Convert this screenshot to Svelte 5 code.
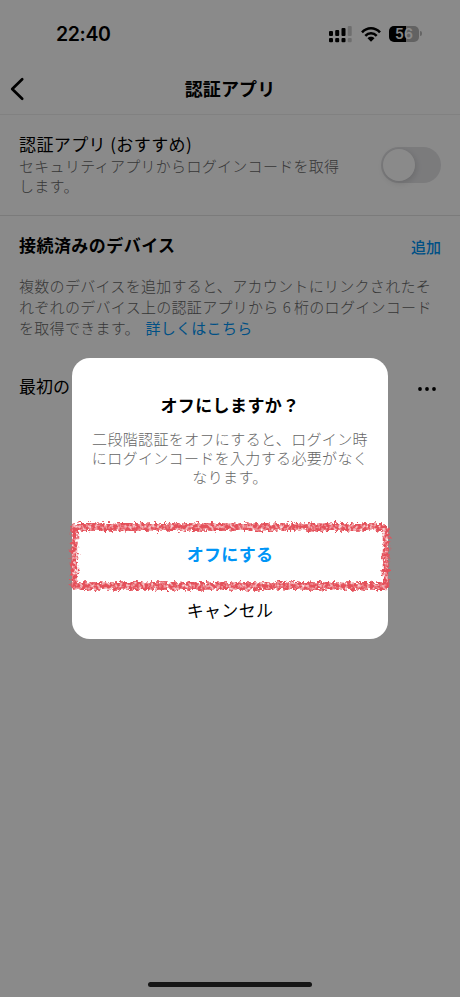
<script lang="ts">
  type Bar = { x: number; top: number; active: boolean }

  const bars: Bar[] = [
    { x: 0, top: 5, active: true },
    { x: 6.2, top: 4, active: true },
    { x: 12.5, top: 2, active: true },
    { x: 18.7, top: 0, active: false },
  ]

  let enabled = $state(false)
  let open = $state(true)

  function turnOff() {
    enabled = false
    open = false
  }
</script>

<div class="screen">
  <header class="status">
    <span class="time">22:40</span>
    <div class="indicators">
      <svg class="signal" width="23" height="17" viewBox="0 0 23 17">
        {#each bars as bar}
          <g opacity={bar.active ? 1 : 0.2}>
            <rect x={bar.x} y={bar.top} width="4" height={10 - bar.top} rx="1.1" />
            <rect x={bar.x} y="12" width="4" height="4.3" rx="1.1" />
          </g>
        {/each}
      </svg>
      <svg class="wifi" width="20" height="15" viewBox="0 0 20 15">
        <g fill="none" stroke="#000" stroke-width="2.5">
          <path d="M1 5.4C6-.1 14-.1 19 5.4" />
          <path d="M4.3 8.8c3.2-3.3 8.2-3.3 11.4 0" />
        </g>
        <path d="M6.5 11.2c2-1.9 5-1.9 7 0L10 14.7z" />
      </svg>
      <div class="battery"><span>56</span></div>
      <i class="tip"></i>
    </div>
  </header>

  <nav>
    <button class="back" aria-label="戻る">
      <svg width="15" height="24" viewBox="0 0 15 24">
        <path
          d="M12.2 2.3L2.2 12l10 9.7"
          fill="none"
          stroke="#000"
          stroke-width="2.7"
          stroke-linecap="round"
          stroke-linejoin="round"
        />
      </svg>
    </button>
    <h1>認証アプリ</h1>
  </nav>

  <section class="method">
    <div>
      <div class="label">認証アプリ (おすすめ)</div>
      <p>セキュリティアプリからログインコードを取得<br />します。</p>
    </div>
    <button
      class="toggle"
      class:on={enabled}
      aria-label="認証アプリ"
      onclick={() => (enabled = !enabled)}
    ></button>
  </section>

  <section class="devices">
    <div class="heading">
      <h2>接続済みのデバイス</h2>
      <button class="add">追加</button>
    </div>
    <p>
      複数のデバイスを追加すると、アカウントにリンクされたそ<br />れぞれのデバイス上の認証アプリから<span
        class="digit">6</span>桁のログインコード<br />を取得できます。<span class="link">詳しくはこちら</span>
    </p>
    <div class="device">
      <span>最初の</span>
      <svg width="20" height="6" viewBox="0 0 20 6">
        <circle cx="3" cy="3" r="1.9" />
        <circle cx="10" cy="3" r="1.9" />
        <circle cx="17" cy="3" r="1.9" />
      </svg>
    </div>
  </section>

  {#if open}
    <div class="backdrop">
      <div class="dialog">
        <h3>オフにしますか？</h3>
        <p>二段階認証をオフにすると、ログイン時<br />にログインコードを入力する必要がなく<br />なります。</p>
        <button class="confirm" onclick={turnOff}>オフにする</button>
        <button class="cancel" onclick={() => (open = false)}>キャンセル</button>
        <svg class="marker" width="332" height="84" viewBox="0 0 332 84">
          <defs>
            <filter
              id="crayon"
              x="0"
              y="0"
              width="332"
              height="84"
              filterUnits="userSpaceOnUse"
              color-interpolation-filters="sRGB"
            >
              <feTurbulence type="fractalNoise" baseFrequency="0.3" numOctaves="3" seed="8" result="noise" />
              <feDisplacementMap in="SourceGraphic" in2="noise" scale="8" xChannelSelector="R" yChannelSelector="G" result="rough" />
              <feTurbulence type="fractalNoise" baseFrequency="0.32" numOctaves="2" seed="3" />
              <feColorMatrix values="0 0 0 0 0  0 0 0 0 0  0 0 0 0 0  0 0 0 -2.2 1.95" result="grain" />
              <feComposite in="rough" in2="grain" operator="in" />
              <feGaussianBlur stdDeviation="0.7" />
            </filter>
          </defs>
          <g filter="url(#crayon)" fill="none" stroke="#e4505a" stroke-linecap="round">
            <path d="M11 14H318M11 73H320" stroke-width="8" />
            <path d="M10 15V72M322 17V72" stroke-width="6.5" />
          </g>
        </svg>
      </div>
    </div>
  {/if}

  <div class="home"></div>
</div>

<style>
  :global(body) {
    margin: 0;
  }

  .screen {
    position: relative;
    width: 460px;
    height: 997px;
    overflow: hidden;
    background: #fff;
    color: #000;
    font-family: "Noto Sans CJK JP", sans-serif;
  }

  h1,
  h2,
  h3,
  p {
    margin: 0;
  }

  p {
    color: #666;
    font-size: 15px;
    font-weight: 300;
    letter-spacing: 0.3px;
    white-space: nowrap;
  }

  button {
    padding: 0;
    border: none;
    background: none;
    color: inherit;
    font: inherit;
  }

  svg {
    display: block;
  }

  .status {
    display: flex;
    justify-content: space-between;
    box-sizing: border-box;
    height: 64px;
    padding: 22px 38px 0 56px;
  }

  .time {
    font: 600 19.5px/25px Inter, sans-serif;
    letter-spacing: -0.35px;
  }

  .indicators {
    display: flex;
    align-items: flex-start;
    padding-top: 4px;
  }

  .wifi {
    margin: 1px 8px 0 9px;
  }

  .battery {
    width: 30px;
    height: 16px;
    border-radius: 5px;
    background: linear-gradient(90deg, #000 56%, #b5b5b5 56%);
    color: #fff;
    font: 600 14px/16px Inter, sans-serif;
    text-align: center;
  }

  .tip {
    width: 2px;
    height: 5px;
    margin: 5px 0 0 1px;
    border-radius: 0 2px 2px 0;
    background: #bbb;
  }

  nav {
    display: grid;
    grid-template-columns: 60px 1fr 60px;
    align-items: center;
    height: 50px;
    border-bottom: 1px solid #efefef;
  }

  .back {
    padding-left: 10px;
  }

  h1 {
    padding-bottom: 2px;
    font-size: 18px;
    line-height: 26px;
    font-weight: 700;
    letter-spacing: 0.1px;
    text-align: center;
  }

  .method {
    display: flex;
    justify-content: space-between;
    box-sizing: border-box;
    height: 101px;
    padding: 17px 19px 0 19px;
    border-bottom: 1px solid #e4e4e4;
  }

  .label {
    font-size: 17px;
    line-height: 24px;
    letter-spacing: 0.4px;
  }

  .method p {
    line-height: 20px;
  }

  .toggle {
    width: 60px;
    height: 36px;
    margin-top: 15px;
    padding: 2px;
    border-radius: 18px;
    background: #e3e3e6;
  }

  .toggle::before {
    content: "";
    display: block;
    width: 32px;
    height: 32px;
    border-radius: 50%;
    background: #fff;
    box-shadow: 1px 2px 6px rgba(0, 0, 0, 0.14);
  }

  .toggle.on::before {
    margin-left: 24px;
  }

  .devices {
    padding: 16px 19px 0;
  }

  .heading {
    display: flex;
    justify-content: space-between;
    line-height: 26px;
  }

  h2 {
    font-size: 17px;
    font-weight: 700;
    letter-spacing: 0.45px;
  }

  .add {
    height: 29px;
    color: #0095f6;
    font-size: 15px;
    line-height: 29px;
    font-weight: 500;
  }

  .devices p {
    margin-top: 14px;
    line-height: 21px;
  }

  .digit {
    margin: 0 3px 0 4px;
  }

  .link {
    margin-left: 5.5px;
    color: #0095f6;
    font-weight: 400;
  }

  .device {
    display: flex;
    align-items: center;
    justify-content: space-between;
    margin-top: 35px;
    padding-right: 4px;
    font-size: 17px;
    line-height: 26px;
  }

  .device svg {
    margin-top: 5px;
  }

  .backdrop {
    position: absolute;
    inset: 0;
    display: flex;
    align-items: center;
    justify-content: center;
    background: rgba(0, 0, 0, 0.46);
  }

  .dialog {
    position: relative;
    display: flex;
    flex-direction: column;
    box-sizing: border-box;
    width: 316px;
    height: 281px;
    padding-top: 34px;
    border-radius: 18px;
    background: #fff;
    text-align: center;
  }

  h3 {
    font-size: 17px;
    line-height: 26px;
    letter-spacing: 0.4px;
  }

  .dialog p {
    margin-top: 11px;
    line-height: 19px;
    letter-spacing: 0.35px;
  }

  .confirm,
  .cancel {
    height: 56px;
    font-size: 17px;
    letter-spacing: 0.3px;
  }

  .confirm {
    margin-top: 39px;
    color: #0095f6;
    font-weight: 700;
  }

  .marker {
    position: absolute;
    top: 155px;
    left: -8px;
    pointer-events: none;
  }

  .home {
    position: absolute;
    bottom: 10px;
    left: 148px;
    width: 164px;
    height: 5px;
    border-radius: 3px;
    background: #161616;
  }
</style>
